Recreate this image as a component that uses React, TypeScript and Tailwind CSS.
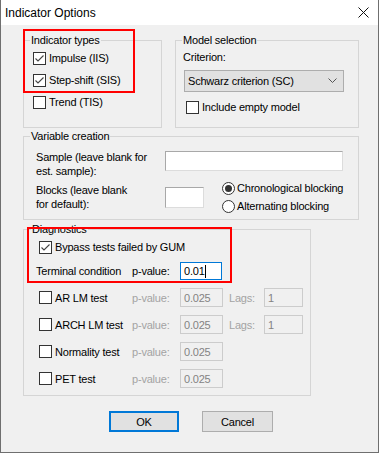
import React from "react";

function Check({ checked = false }: { checked?: boolean }) {
  return (
    <span className="w-[13px] h-[13px] shrink-0 border border-[#333333] bg-white flex items-center justify-center">
      {checked && (
        <svg width="11" height="11" viewBox="0 0 11 11">
          <polyline points="1.5,5.5 4,8 9.5,2.5" fill="none" stroke="#444444" strokeWidth="1.1" />
        </svg>
      )}
    </span>
  );
}

function Radio({ checked = false }: { checked?: boolean }) {
  return (
    <span className="w-[13px] h-[13px] shrink-0 rounded-full border border-[#333333] bg-white flex items-center justify-center">
      {checked && <span className="w-[7px] h-[7px] rounded-full bg-[#333333]" />}
    </span>
  );
}

function CheckRow({ label, checked = false }: { label: string; checked?: boolean }) {
  return (
    <div className="flex items-center gap-[3px]">
      <Check checked={checked} />
      <span>{label}</span>
    </div>
  );
}

function DisabledInput({ value, w }: { value: string; w: string }) {
  return (
    <div className={`${w} h-[19px] border border-[#cccccc] bg-[#f0f0f0] text-[#838383] flex items-center pl-[3px]`}>
      {value}
    </div>
  );
}

function TestRow({ label, lags = false }: { label: string; lags?: boolean }) {
  return (
    <div className="flex items-center h-[19px] mt-[8px] pl-[15px]">
      <div className="w-[93px] flex items-center gap-[3px]">
        <Check />
        <span>{label}</span>
      </div>
      <span className="w-[48px] text-[#a3a3a3]">p-value:</span>
      <DisabledInput value="0.025" w="w-[43px]" />
      {lags && (
        <>
          <span className="ml-[6px] w-[35px] text-[#a3a3a3]">Lags:</span>
          <DisabledInput value="1" w="w-[39px]" />
        </>
      )}
    </div>
  );
}

export default function App() {
  return (
    <div className="relative w-[379px] h-[453px] bg-[#f0f0f0] border-x border-b border-[#6f6f6f] font-['Liberation_Sans',Arial,sans-serif] text-[11px] leading-[14px] text-black overflow-hidden">
      <div className="h-[25px] bg-white flex items-center justify-between pl-[4px] pr-[9px]">
        <span className="text-[12px]">Indicator Options</span>
        <svg width="11" height="11" viewBox="0 0 11 11">
          <path d="M0.5 0.5 L10.5 10.5 M10.5 0.5 L0.5 10.5" stroke="#111111" strokeWidth="1" />
        </svg>
      </div>

      <div className="pl-[22px] pt-[8px] tracking-[-0.2px]">
        <div className="flex gap-[13px]">
          <fieldset className="w-[139px] h-[95px] border border-[#d5d5d5]">
            <legend className="ml-[6px] px-[1px] leading-[14px]">Indicator types</legend>
            <div className="flex flex-col pl-[9px]">
              <div className="h-[22px] flex items-center"><CheckRow label="Impulse (IIS)" checked /></div>
              <div className="h-[22px] flex items-center"><CheckRow label="Step-shift (SIS)" checked /></div>
              <div className="h-[22px] flex items-center"><CheckRow label="Trend (TIS)" /></div>
            </div>
          </fieldset>
          <fieldset className="w-[184px] h-[95px] border border-[#d5d5d5]">
            <legend className="ml-[6px] px-[1px] leading-[14px]">Model selection</legend>
            <div className="flex flex-col pl-[7px] pt-[3px]">
              <span>Criterion:</span>
              <div className="ml-[1px] mt-[6px] w-[160px] h-[22px] bg-[#e1e1e1] border border-[#adadad] flex items-center justify-between pl-[3px] pr-[6px]">
                <span>Schwarz criterion (SC)</span>
                <svg width="9" height="6" viewBox="0 0 9 6">
                  <polyline points="0.5,0.5 4.5,4.5 8.5,0.5" fill="none" stroke="#555555" strokeWidth="1" />
                </svg>
              </div>
              <div className="ml-[3px] mt-[8px]"><CheckRow label="Include empty model" /></div>
            </div>
          </fieldset>
        </div>

        <fieldset className="mt-[1px] w-[336px] h-[91px] border border-[#d5d5d5]">
          <legend className="ml-[6px] px-[1px] leading-[14px]">Variable creation</legend>
          <div className="pl-[12px] pt-[7px]">
            <div className="flex items-start">
              <div className="w-[129px]">Sample (leave blank for<br />est. sample):</div>
              <div className="mt-[1px] w-[178px] h-[20px] bg-white border border-[#a8a8a8] border-r-[#dcdcdc] border-b-[#dcdcdc]" />
            </div>
            <div className="flex items-start mt-[5px]">
              <div className="w-[129px]">Blocks (leave blank<br />for default):</div>
              <div className="mt-[4px] w-[39px] h-[21px] bg-white border border-[#a8a8a8] border-r-[#dcdcdc] border-b-[#dcdcdc]" />
              <div className="ml-[18px] -mt-[4px] flex flex-col">
                <div className="h-[18px] flex items-center gap-[2px]"><Radio checked /><span>Chronological blocking</span></div>
                <div className="h-[18px] flex items-center gap-[2px]"><Radio /><span>Alternating blocking</span></div>
              </div>
            </div>
          </div>
        </fieldset>

        <fieldset className="mt-[2px] w-[288px] h-[174px] border border-[#d5d5d5]">
          <legend className="ml-[7px] px-[1px] leading-[14px]">Diagnostics</legend>
          <div className="pt-[4px]">
            <div className="pl-[15px]"><CheckRow label="Bypass tests failed by GUM" checked /></div>
            <div className="flex items-center h-[18px] mt-[8px] pl-[12px]">
              <span className="w-[96px]">Terminal condition</span>
              <span className="w-[48px]">p-value:</span>
              <div className="w-[42px] h-[18px] bg-white border border-[#0078d7] flex items-center pl-[3px]">
                <span>0.01</span>
                <span className="w-px h-[13px] bg-black" />
              </div>
            </div>
            <TestRow label="AR LM test" lags />
            <TestRow label="ARCH LM test" lags />
            <TestRow label="Normality test" />
            <TestRow label="PET test" />
          </div>
        </fieldset>

        <div className="flex mt-[15px] ml-[86px] gap-[23px]">
          <div className="w-[70px] h-[21px] bg-[#e1e1e1] border-2 border-[#0078d7] flex items-center justify-center">OK</div>
          <div className="w-[71px] h-[21px] bg-[#e1e1e1] border border-[#adadad] flex items-center justify-center">Cancel</div>
        </div>
      </div>

      <div className="absolute left-[22px] top-[29px] w-[112px] h-[64px] border-2 border-[#ff0000]" />
      <div className="absolute left-[26px] top-[227px] w-[205px] h-[56px] border-2 border-[#ff0000]" />
    </div>
  );
}
